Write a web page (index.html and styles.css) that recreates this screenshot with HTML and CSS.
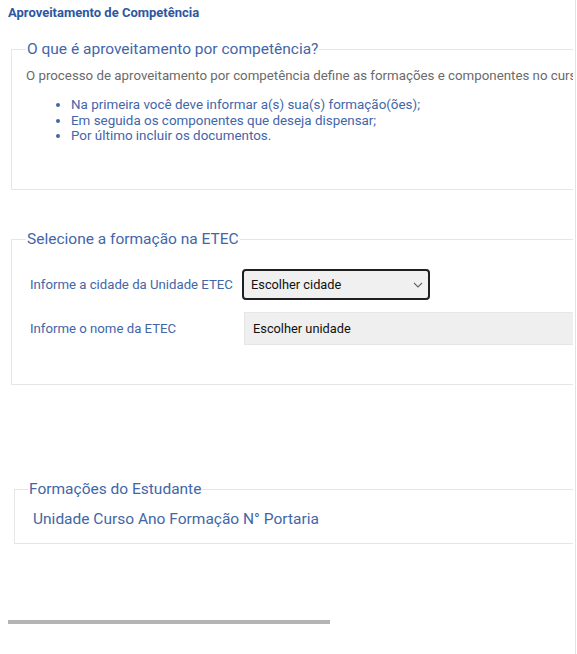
FILE: index.html
```html
<!DOCTYPE html>
<html lang="pt-BR">
<head>
<meta charset="utf-8">
<link rel="stylesheet" href="styles.css">
</head>
<body>
<div class="page">
  <div class="clip">
    <h1 class="title">Aproveitamento de Competência</h1>

    <fieldset class="box box-info">
      <legend class="legend">O que é aproveitamento por competência?</legend>
      <p class="intro">O processo de aproveitamento por competência define as formações e componentes no curso escolhido pelo estudante.</p>
      <ul class="steps">
        <li>Na primeira você deve informar a(s) sua(s) formação(ões);</li>
        <li>Em seguida os componentes que deseja dispensar;</li>
        <li>Por último incluir os documentos.</li>
      </ul>
    </fieldset>

    <fieldset class="box box-select">
      <legend class="legend">Selecione a formação na ETEC</legend>
      <div class="row">
        <label class="label">Informe a cidade da Unidade ETEC</label>
        <div class="select">
          <span>Escolher cidade</span>
          <svg class="chev" width="10" height="6" viewBox="0 0 10 6"><path d="M1 1 L5 5 L9 1" fill="none" stroke="#666" stroke-width="1.1"/></svg>
        </div>
      </div>
      <div class="row">
        <label class="label">Informe o nome da ETEC</label>
        <div class="input">Escolher unidade</div>
      </div>
    </fieldset>

    <fieldset class="box box-form">
      <legend class="legend legend-form">Formações do Estudante</legend>
      <div class="cols">Unidade Curso Ano Formação N° Portaria</div>
    </fieldset>

    <div class="hscroll"><div class="thumb"></div></div>
  </div>
</div>
</body>
</html>
```

FILE: styles.css
```css
html, body {
  margin: 0;
  padding: 0;
  background: #fff;
}
body {
  font-family: Roboto, "Noto Sans", sans-serif;
}
.page {
  width: 575px;
  height: 654px;
  border-right: 1px solid #e2e2e2;
  overflow: hidden;
}
.clip {
  width: 565px;
  padding-left: 8px;
  overflow: hidden;
}
.title {
  margin: 0;
  padding-top: 5px;
  font-size: 13px;
  font-weight: 700;
  line-height: 15px;
  color: #2f56a0;
}
.box {
  width: 760px;
  margin: 20px 0 0 3px;
  padding: 0 0 0 14px;
  border: 1px solid #e6e6e6;
  box-sizing: border-box;
}
.legend {
  padding: 0 1px;
  font-size: 15.5px;
  line-height: 18px;
  color: #4266a8;
}
.box-info {
  height: 150px;
  margin-top: 20px;
}
.intro {
  margin: 10px 0 0 0;
  white-space: nowrap;
  font-size: 13.3px;
  line-height: 16px;
  color: #6a6a6a;
}
.steps {
  margin: 13px 0 0 0;
  padding-left: 45px;
  font-size: 13.4px;
  line-height: 15.5px;
  color: #4266a8;
}
.box-select {
  height: 155px;
  margin-top: 40px;
}
.row {
  display: flex;
  align-items: center;
  margin-left: 4px;
}
.row:first-of-type {
  margin-top: 21px;
}
.label {
  width: 212px;
  font-size: 13.2px;
  color: #4266a8;
}
.select {
  display: flex;
  align-items: center;
  justify-content: space-between;
  width: 188px;
  height: 31px;
  padding: 0 5px 0 7px;
  box-sizing: border-box;
  border: 2px solid #1f1f1f;
  border-radius: 4px;
  background: #f0f0f0;
  font-size: 12.8px;
  color: #111;
}
.row + .row {
  margin-top: 12px;
}
.input {
  height: 33px;
  width: 400px;
  margin-left: 2px;
  padding-left: 8px;
  display: flex;
  align-items: center;
  box-sizing: border-box;
  background: #efefef;
  border: 1px solid #e6e6e6;
  font-size: 12.8px;
  color: #111;
}
.box-form {
  height: 64px;
  margin: 95px 0 0 6px;
}
.legend-form {
  margin-left: -1px;
}
.cols {
  margin: 12px 0 0 4px;
  font-size: 15.5px;
  line-height: 18px;
  color: #4266a8;
}
.hscroll {
  margin-top: 76px;
  height: 6px;
}
.thumb {
  width: 322px;
  height: 4px;
  background: #b4b4b4;
}
```
